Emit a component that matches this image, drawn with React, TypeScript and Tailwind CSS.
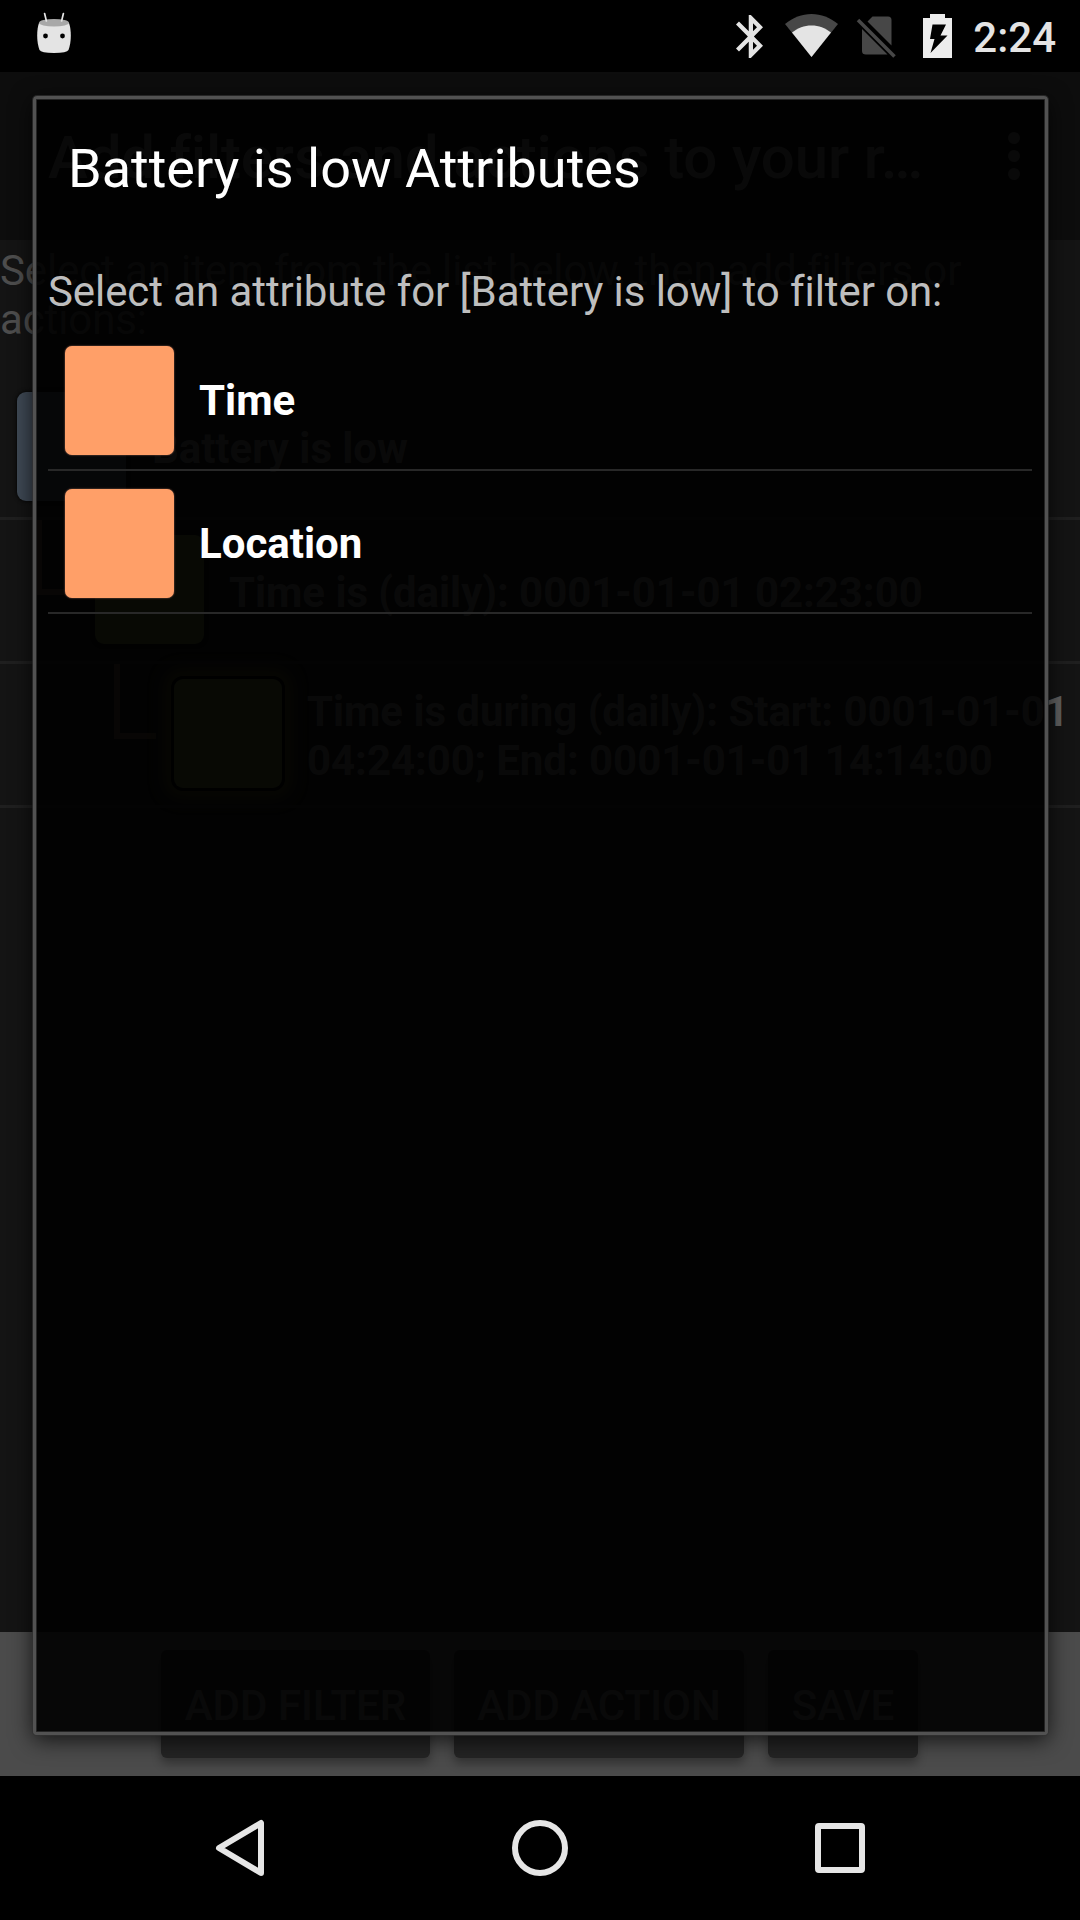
import React from "react";

function StatusBar() {
  return (
    <header className="flex h-[72px] items-start bg-black pl-[36px] pr-[24px]">
      <svg className="mt-[12px] h-[42px] w-[36px]" viewBox="36 12 36 42">
        <path d="M39 23C36.500 30 36.500 42 39.500 50Q41 53 54 53Q67 53 68.500 50C71.500 42 71.500 30 69 23Z" fill="#e4e4e4" />
        <ellipse cx="54" cy="22.700" rx="15" ry="3.800" fill="#a8a8a8" />
        <path d="M44.600 13.500L46.400 21M63.400 13.500L61.600 21" stroke="#e4e4e4" strokeWidth="1.700" strokeLinecap="round" />
        <circle cx="45.500" cy="36" r="2.400" fill="#000" />
        <circle cx="62.500" cy="36" r="2.400" fill="#000" />
      </svg>
      <div className="ml-auto flex items-start">
        <svg className="mt-[15px] h-[43px] w-[27px]" viewBox="5 2 12.710 20" preserveAspectRatio="none">
          <path
            fill="#e4e4e4"
            d="M17.710 7.710L12 2h-1v7.590L6.410 5 5 6.410 10.590 12 5 17.590 6.410 19 11 14.410V22h1l5.710-5.710-4.300-4.290 4.300-4.290zM13 5.830l1.880 1.880L13 9.590V5.830zm1.880 10.460L13 18.170v-3.760l1.880 1.880z"
          />
        </svg>
        <svg className="ml-[22px] mt-[14px] h-[43px] w-[53px]" viewBox="785 14 53 43">
          <path d="M811.500 57L785 24C793 17.500 802 14 811.500 14S830 17.500 838 24Z" fill="#474747" />
          <path d="M811.500 57L792 32.500C798 28 804 25.500 811.500 25.500S825 28 831 32.500Z" fill="#e4e4e4" />
        </svg>
        <svg className="ml-[18px] mt-[14px] h-[46px] w-[42px]" viewBox="856 14 42 46">
          <path d="M862 29L887.500 54.500H866Q862 54.500 862 51ZM867.500 21.500L872.500 16.500H888Q891.500 16.500 891.500 20V45.500Z" fill="#474747" />
          <path d="M858 20L894.500 56.500" stroke="#474747" strokeWidth="3.600" />
        </svg>
        <svg className="ml-[25px] mt-[14px] h-[44px] w-[29px]" viewBox="923 14 29 44">
          <path d="M930 14H945V18H952V58H923V18H930Z" fill="#ececec" />
          <path d="M932.500 24.500H946L940.500 35.500H947.500L930.500 53L934.500 39H930Z" fill="#000" />
        </svg>
        <span className="ml-[21px] mt-[13px] text-[42px] font-medium leading-[50px] text-[#e4e4e4]">2:24</span>
      </div>
    </header>
  );
}

function Branch({ className }: { className: string }) {
  return <div className={"h-[75px] shrink-0 self-start border-b-[6px] border-l-[6px] border-[#503f32] " + className} />;
}

function RuleList() {
  return (
    <ul className="mt-[38px] text-[42px] font-bold leading-[49px] tracking-[-0.05px] text-[#606060]">
      <li className="flex h-[144px] items-center border-b-[3px] border-[#1f1f1f] pl-[17px]">
        <div className="mb-px h-[109px] w-[109px] shrink-0 rounded-[9px] bg-[#3f4955] shadow-[0_0_4px_#000]" />
        <span className="ml-[26px] mt-[3px]">Battery is low</span>
      </li>
      <li className="flex h-[144px] items-center border-b-[3px] border-[#1f1f1f] pl-[36px]">
        <Branch className="w-[28px]" />
        <div className="mb-[2px] ml-[31px] h-[109px] w-[109px] shrink-0 rounded-[9px] bg-[#4f5a30] shadow-[0_0_4px_#000]" />
        <span className="ml-[25px] mt-[3px]">Time is (daily): 0001-01-01 02:23:00</span>
      </li>
      <li className="flex h-[144px] items-center border-b-[3px] border-[#1f1f1f] pl-[114px]">
        <Branch className="w-[42px]" />
        <div className="mb-[3px] ml-[18px] h-[109px] w-[108px] shrink-0 rounded-[9px] bg-[#4f5a30] shadow-[0_0_0_3px_#000,0_0_14px_11px_#44401e]" />
        <span className="ml-[25px] mt-[3px] w-[770px] shrink-0">
          Time is during (daily): Start: 0001-01-01 04:24:00; End: 0001-01-01 14:14:00
        </span>
      </li>
    </ul>
  );
}

function ActionButton({ label, className }: { label: string; className: string }) {
  return (
    <button
      className={
        "h-[108px] whitespace-nowrap rounded-[6px] bg-[#242424] pl-px pt-[2px] text-center text-[42px] font-medium text-[#606060] shadow-[0_6px_10px_rgba(0,0,0,0.3)] " +
        className
      }
    >
      {label}
    </button>
  );
}

function RulePage() {
  return (
    <main className="flex h-[1704px] flex-col bg-[#141414]">
      <div className="flex h-[168px] items-center justify-between bg-[#0d0d0d] pl-[48px] pr-[60px]">
        <h1 className="mt-[4px] text-[60px] font-medium leading-[70px] tracking-[-0.15px] text-[#606060]">
          Add filters and actions to your r…
        </h1>
        <div className="flex flex-col gap-[6px]">
          <i className="h-[12px] w-[12px] rounded-full bg-[#606060]" />
          <i className="h-[12px] w-[12px] rounded-full bg-[#606060]" />
          <i className="h-[12px] w-[12px] rounded-full bg-[#606060]" />
        </div>
      </div>
      <p className="h-[98px] w-[1080px] pt-[6px] text-[42px] leading-[49px] tracking-[-0.12px] text-[#4d4d4d]">
        Select an item from the list below, then add filters or actions:
      </p>
      <RuleList />
      <div className="mt-auto flex h-[144px] items-center justify-center gap-[24px] bg-[#4b4b4b] pr-[2px]">
        <ActionButton label="ADD FILTER" className="w-[269px]" />
        <ActionButton label="ADD ACTION" className="w-[290px]" />
        <ActionButton label="SAVE" className="w-[150px]" />
      </div>
    </main>
  );
}

function Attribute({ label }: { label: string }) {
  return (
    <li className="flex h-[143px] items-center border-b-2 border-[#282828] pl-[17px] pt-[3px]">
      <div className="h-[109px] w-[109px] rounded-[7px] bg-[#ff9f68] shadow-[0_0_2px_#a06a58]" />
      <span className="ml-[25px] text-[42px] font-bold leading-[49px] text-white">{label}</span>
    </li>
  );
}

function AttributeDialog() {
  return (
    <section className="absolute left-[33px] top-[96px] h-[1639px] w-[1015px] rounded-[4px] border-[3px] border-[#525252] bg-black/90 pl-[12px] pr-[13px] shadow-[inset_0_0_0_1px_#242424,0_0_0_1px_rgba(50,50,50,0.7),0_5px_22px_rgba(0,0,0,0.75)]">
      <h2 className="ml-[20px] mt-[38px] text-[54px] leading-[64px] text-white">Battery is low Attributes</h2>
      <p className="mt-[66px] text-[42px] leading-[49px] tracking-[-0.08px] text-[#bebebe]">
        Select an attribute for [Battery is low] to filter on:
      </p>
      <ul className="mt-[12px]">
        <Attribute label="Time" />
        <Attribute label="Location" />
      </ul>
    </section>
  );
}

function NavigationBar() {
  return (
    <nav className="flex h-[144px] items-center bg-black pl-[213px]">
      <svg className="h-[60px] w-[54px]" viewBox="213 1818 54 60">
        <path d="M261 1823V1873L219 1848Z" fill="none" stroke="#e6e6e6" strokeWidth="6" strokeLinejoin="round" />
      </svg>
      <div className="ml-[245px] h-[56px] w-[56px] rounded-full border-[6px] border-[#e6e6e6]" />
      <div className="ml-[247px] h-[50px] w-[50px] rounded-[4px] border-[6px] border-[#e6e6e6]" />
    </nav>
  );
}

export default function App() {
  return (
    <div className="relative h-[1920px] w-[1080px] overflow-hidden bg-black font-['Roboto',sans-serif]">
      <StatusBar />
      <RulePage />
      <NavigationBar />
      <AttributeDialog />
    </div>
  );
}
